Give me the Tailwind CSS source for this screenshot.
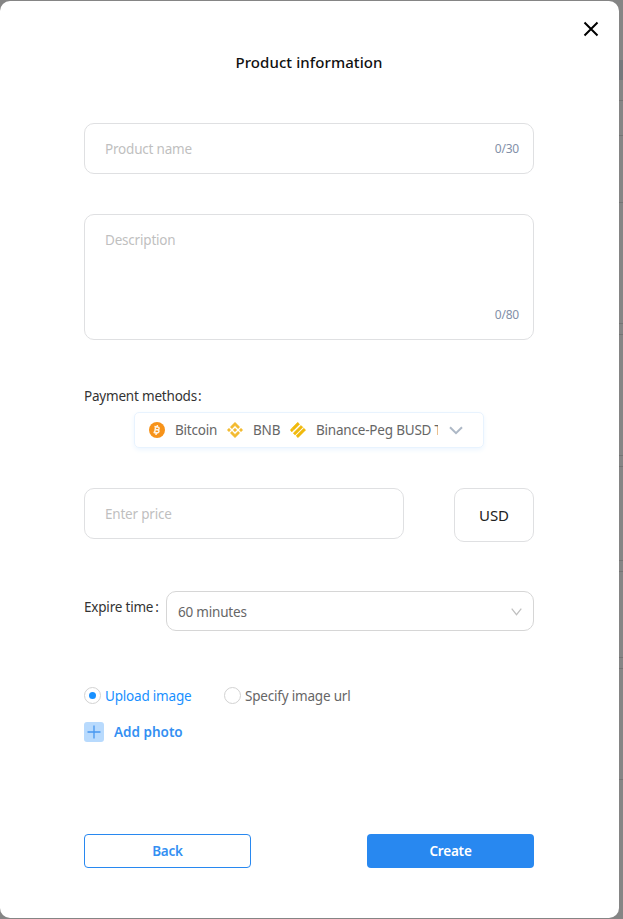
<!DOCTYPE html>
<html lang="en">
<head>
<meta charset="utf-8">
<title>Product information</title>
<script src="https://cdn.jsdelivr.net/npm/@tailwindcss/browser@4"></script>
</head>
<body class="relative h-[919px] w-[623px] overflow-hidden bg-[#858585] font-['Noto_Sans',sans-serif] text-sm tracking-[-0.2px] text-[#333]">
<div class="absolute top-0 right-0 h-full w-1 overflow-hidden">
  <div class="mt-[60px] h-5 bg-[#75787c]"></div>
  <div class="mt-5 h-px bg-[#747474]"></div>
  <div class="mt-[34px] h-px bg-[#747474]"></div>
  <div class="mt-[66px] h-px bg-[#747474]"></div>
  <div class="mt-[120px] h-3 border-y border-[#747474]"></div>
  <div class="mt-[120px] h-3 border-y border-[#747474]"></div>
  <div class="mt-[93px] h-3 border-y border-[#747474]"></div>
  <div class="mt-[85px] h-3 border-y border-[#747474]"></div>
  <div class="mt-[110px] h-px bg-[#747474]"></div>
</div>
<main class="relative mt-px h-[917px] w-[619px] rounded-[10px] bg-white px-[84px] pt-[49px]">
  <button class="absolute top-5 right-5" aria-label="Close"><svg width="16" height="16" viewBox="0 0 16 16" fill="none" stroke="#000" stroke-width="2"><path d="M1.5 1.5 14.5 14.5M14.5 1.5 1.5 14.5"/></svg></button>
  <h1 class="h-6 w-[450px] text-center text-[15px] leading-6 font-medium tracking-[0.08px] text-[#111]">Product information</h1>
  <div class="mt-[49px] flex h-[51px] w-[450px] items-center justify-between rounded-[10px] border border-[#dfe0e2] pr-3.5 pl-5">
    <span class="pt-0.5 text-[13.5px] text-[#bfbfbf]">Product name</span><span class="text-xs text-[#8290a8]">0/30</span>
  </div>
  <div class="mt-10 flex h-[126px] w-[450px] flex-col justify-between rounded-[10px] border border-[#dfe0e2] pt-[15px] pr-3.5 pb-4 pl-5">
    <span class="text-[13.5px] leading-5 text-[#bfbfbf]">Description</span><span class="self-end text-xs leading-4 text-[#8290a8]">0/80</span>
  </div>
  <div class="mt-[46px] h-5 text-[13.5px] leading-5 whitespace-nowrap">Payment methods<span class="ml-px">:</span></div>
  <div class="mt-[6px] ml-[50px] flex h-9 w-[350px] items-center rounded-[5px] border border-[#e8f3fe] pl-3.5 text-[13.5px] text-[#666] shadow-[0_2px_5px_#edf6ff]">
    <svg class="shrink-0" width="16" height="16" viewBox="0 0 16 16"><circle cx="8" cy="8" r="8" fill="#f7931a"/><path d="M6.7 4.3 5.5 11.5M5.4 4.5l3.1.5c2.4.4 2.1 3-.4 2.8l-1.8-.3 2 .3c2.6.5 2 3.5-.8 3l-3-.5M8.4 3 8.1 5M7.3 10.8 7 13" fill="none" stroke="#fff3e2" stroke-width="1.5"/></svg>
    <span class="ml-2.5 w-[52px] pt-0.5 whitespace-nowrap">Bitcoin</span>
    <svg class="shrink-0" width="16" height="16" viewBox="0 0 16 16" fill="#f3ba2f" stroke="#f3ba2f" stroke-width=".5"><path d="m8 .3 4.7 4.6-1.6 1.8L8 3.6 4.9 6.7 3.3 4.9zM2 6.2 3.6 8 2 9.8.3 8zM8 6.2 9.8 8 8 9.8 6.2 8zM14 6.2 15.7 8 14 9.8 12.4 8zM4.9 9.3 8 12.4l3.1-3.1 1.6 1.8L8 15.7l-4.7-4.6z"/></svg>
    <span class="ml-2.5 w-[37px] pt-0.5 whitespace-nowrap">BNB</span>
    <svg class="shrink-0" width="16" height="16" viewBox="0 0 16 16" fill="#f0b90b" stroke="#f0b90b" stroke-width=".5"><path d="m7.7.3 1.9 1.9-5.7 5.7L2 6zM11 3.4l1.9 1.9-7.8 7.8-1.9-1.9zM13.8 6.2l1.9 1.8-7.7 7.7-1.9-1.9zM1.8 6.3l1.8 1.8-1.8 1.8L.3 8.1z"/></svg>
    <span class="ml-2.5 w-[122px] overflow-hidden pt-0.5 whitespace-nowrap">Binance-Peg BUSD Token</span>
    <svg class="ml-[11px] shrink-0" width="14" height="9" viewBox="0 0 14 9" fill="none" stroke="#adb8c6" stroke-width="2"><path d="m1 1.2 6 6 6-6"/></svg>
  </div>
  <div class="mt-10 flex items-start gap-[50px]">
    <div class="flex h-[51px] w-80 items-center rounded-[10px] border border-[#dfe0e2] pt-0.5 pl-5 text-[13.5px] text-[#bfbfbf]">Enter price</div>
    <div class="flex h-[54px] w-20 items-center justify-center rounded-[10px] border border-[#dfe0e2] pt-0.5 text-[15px] tracking-normal text-[#222]">USD</div>
  </div>
  <div class="mt-[49px] flex h-10 w-[450px]">
    <div class="w-[82px] pt-1.5 text-[13.5px] leading-5 whitespace-nowrap">Expire time<span class="ml-0.5">:</span></div>
    <div class="flex flex-1 items-center justify-between rounded-[10px] border border-[#d6d6d6] pr-[11px] pl-[11px] text-[13.5px] text-[#666]"><span class="pt-[3px]">60 minutes</span><svg class="mt-px" width="11" height="8" viewBox="0 0 11 8" fill="none" stroke="#bfbfbf" stroke-width="1.2"><path d="m.7.7 4.8 6 4.8-6"/></svg></div>
  </div>
  <div class="mt-[54px] flex h-5 items-center text-[13.5px] leading-5 text-[#666]">
    <span class="flex size-[17px] items-center justify-center rounded-full border border-[#d2d2d2]"><span class="size-[7px] rounded-full bg-[#1890ff]"></span></span>
    <span class="ml-1 w-[119px] pt-0.5 whitespace-nowrap text-[#1890ff]">Upload image</span>
    <span class="size-[17px] rounded-full border border-[#d2d2d2]"></span><span class="ml-1 pt-0.5 whitespace-nowrap">Specify image url</span>
  </div>
  <div class="mt-[17px] flex h-5 items-center gap-2.5 text-[13.5px] font-semibold tracking-normal text-[#348ff2]">
    <svg width="20" height="20" viewBox="0 0 20 20"><rect width="20" height="20" rx="3" fill="#b8dafd"/><path d="M3.5 10h13M10 3.5v13" stroke="#4797f0" stroke-width="1.3"/></svg><span class="pt-0.5">Add photo</span>
  </div>
  <div class="mt-[92px] flex w-[450px] justify-between text-[13.5px] font-semibold">
    <button class="h-[34px] w-[167px] rounded-[4px] border border-[#2888f0] pt-0.5 text-[#348ff2]">Back</button>
    <button class="h-[34px] w-[167px] rounded-[4px] bg-[#2888f0] pt-0.5 text-white">Create</button>
  </div>
</main>
</body>
</html>
